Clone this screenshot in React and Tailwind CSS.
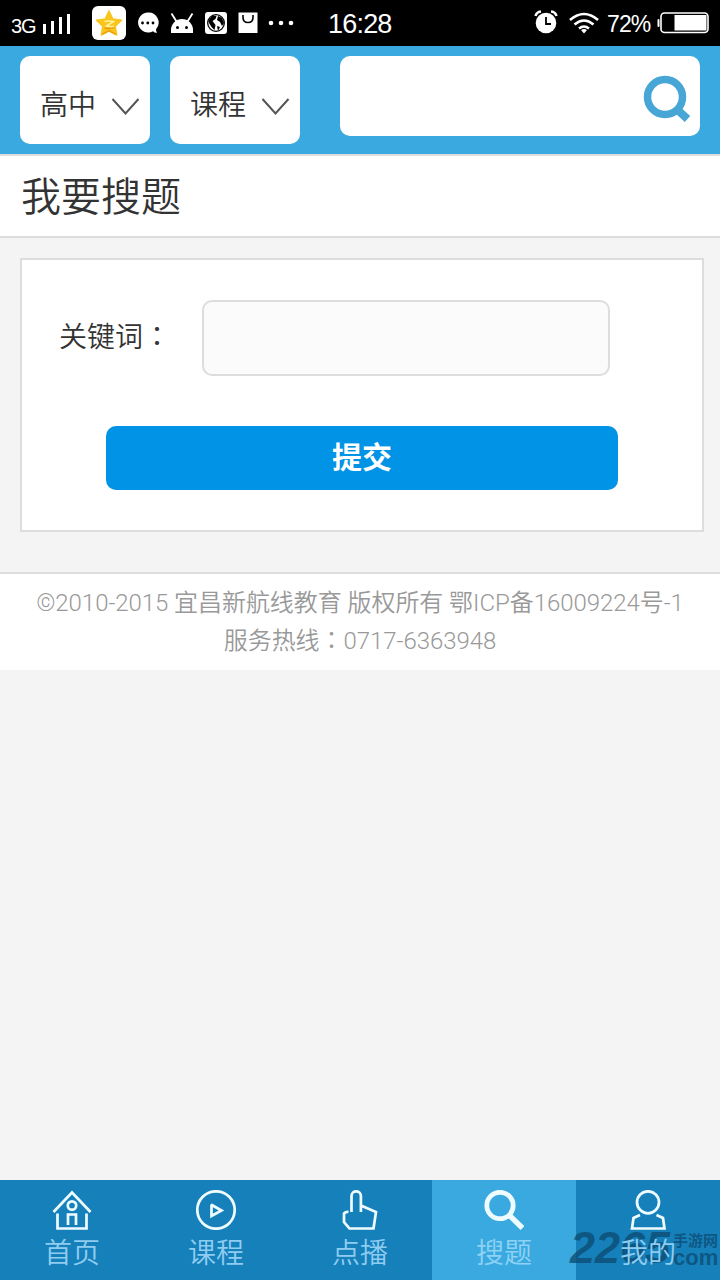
const cjk = "font-['Liberation_Sans','Noto_Sans_CJK_SC',sans-serif]";

function Star() {
  return (
    <svg width="34" height="34" viewBox="0 0 34 34" className="ml-[21px] shrink-0">
      <rect width="34" height="34" rx="6" fill="#fff" />
      <path d="M17 5l3.800 8 8.700 1.200-6.300 6 1.500 8.800L17 25l-7.700 4 1.500-8.800-6.300-6 8.700-1.200z" fill="#fac51c" stroke="#fac51c" strokeWidth="1.500" strokeLinejoin="round" />
      <path d="M12.500 15.500q5-1 9 0L14.500 20q4 1 7.500 .2" fill="none" stroke="#fff3a0" strokeWidth="1.500" />
      <path d="M12.500 22q6 1.200 10-.5M10.500 28l6.500-3.300 6.500 3.300" fill="none" stroke="#e89c12" strokeWidth="1.300" />
    </svg>
  );
}

function StatusBar() {
  return (
    <div className="flex h-[46px] items-center bg-black text-white">
      <span className="ml-[11px] mt-[5px] w-[25px] text-[20px] leading-none tracking-[-1.2px]">3G</span>
      <svg width="29" height="21" viewBox="0 0 29 21" className="ml-[6px]" fill="#fff">
        <rect x="1" y="11" width="3" height="10" /><rect x="9" y="8" width="3" height="13" />
        <rect x="17" y="4" width="3" height="17" /><rect x="25" y="1" width="3" height="20" />
      </svg>
      <Star />
      <svg width="22" height="22" viewBox="0 0 22 22" className="ml-[11px]">
        <path d="M11 .5a10 10 0 1 0 5 18.700q2 2 4 1.500-1-1-1-3.500A10 10 0 0 0 11 .5z" fill="#fff" />
        <circle cx="5.500" cy="11" r="1.400" /><circle cx="10.800" cy="11" r="1.400" /><circle cx="16" cy="11" r="1.400" />
      </svg>
      <svg width="24" height="22" viewBox="0 0 24 22" className="ml-[11px]">
        <path d="M1 21V18a11 11 0 0 1 22 0v3z" fill="#fff" />
        <path d="M1.500 1.500l5 8M22.500 1.500l-5 8" stroke="#fff" strokeWidth="1.800" />
        <circle cx="7.500" cy="15.500" r="1.500" /><circle cx="16.500" cy="15.500" r="1.500" />
      </svg>
      <svg width="22" height="22" viewBox="0 0 22 22" className="ml-[11px]">
        <rect width="22" height="22" rx="3" fill="#fff" />
        <circle cx="11" cy="11" r="8.300" fill="#fff" stroke="#000" strokeWidth="1.300" />
        <path d="M3.500 8l4-4.500 4 .5-1 3-3 2 3 4-1 5-3-3-2.500-4zM13 4l4 2 2 5-2 3-2-4-3-2zM12 14l3 1-2 4z" />
      </svg>
      <svg width="20" height="22" viewBox="0 0 20 22" className="ml-[11px]">
        <rect x="0.500" y="0.500" width="19" height="20.500" fill="#fff" />
        <path d="M5 3v2.500q0 5 5 5t5-5V3" fill="none" stroke="#000" strokeWidth="1.600" />
      </svg>
      <svg width="26" height="6" viewBox="0 0 26 6" className="ml-[10px]" fill="#fff">
        <circle cx="3" cy="3" r="2.300" /><circle cx="13" cy="3" r="2.300" /><circle cx="23" cy="3" r="2.300" />
      </svg>
      <span className="ml-[34px] mt-[3px] w-[72px] text-[27px] leading-none tracking-[-0.8px]">16:28</span>
      <svg width="24" height="24" viewBox="0 0 24 24" className="mb-[2px] ml-auto">
        <circle cx="12" cy="13" r="10.300" fill="#fff" />
        <path d="M1.500 6q1-4 5.500-4.500M22.500 6q-1-4-5.500-4.500" fill="none" stroke="#fff" strokeWidth="2.500" />
        <path d="M12 7v7h5" fill="none" stroke="#000" strokeWidth="1.800" />
      </svg>
      <svg width="30" height="22" viewBox="0 0 30 22" className="ml-[11px]" fill="none" stroke="#fff" strokeWidth="2.600">
        <path d="M1 8Q15-4 29 8M5.500 12.500q9.500-8 19 0M10 16.500q5-4 10 0" />
        <path d="M12 18q3-2 6 0l-3 3.500z" fill="#fff" stroke="none" />
      </svg>
      <span className="ml-[8px] mt-[3px] w-[45px] text-[23px] leading-none tracking-[-0.9px]">72%</span>
      <svg width="52" height="22" viewBox="0 0 52 22" className="ml-[5px] mr-[11px]">
        <rect x="4" y="1" width="47" height="19.500" rx="3.500" fill="none" stroke="#fff" strokeWidth="1.600" />
        <rect x="17.500" y="3" width="32" height="15.500" fill="#fff" /><rect x="0.500" y="7" width="2" height="8" rx="1" fill="#fff" />
      </svg>
    </div>
  );
}

function Picker({ label }) {
  return (
    <button className="flex h-[88px] w-[130px] items-center rounded-[10px] bg-white pl-5 text-[28px] font-[350] text-[#333]">
      <span className="mt-[12px] w-[56px] leading-[40px]">{label}</span>
      <svg width="30" height="20" viewBox="0 0 30 20" className="ml-[15px] mt-[13px]">
        <path d="M1.500 2l13 14.500L27.500 2" fill="none" stroke="#555" strokeWidth="2" />
      </svg>
    </button>
  );
}

const tabs = [
  ["首页", <><path d="M1.500 22L20 2.500 38.500 22" /><path d="M5.500 23.500v15h29V23.500" /><circle cx="20" cy="15.500" r="4.200" /><path d="M16 35V24.500h8V35" /></>],
  ["课程", <><circle cx="20" cy="20" r="18.700" /><path d="M15.500 14.500v11.500l10-5.500L15 14.500" /></>],
  ["点播", <path d="M11.500 22V6a4.700 4.700 0 0 1 9.400 0v16M20.900 15.500L36 22l-2.500 16.500H9.500L4 32V23.500q2-2 4.500-1.500" />],
  ["搜题", <><circle cx="16" cy="15.500" r="13.200" strokeWidth="4.800" /><path d="M25.500 25.500l13 12.500" strokeWidth="5.500" /></>],
  ["我的", <><circle cx="20" cy="12.300" r="11" /><path d="M12 25l-6.500 3L4 38.500h32.500L35 28l-6.500-3" /></>],
];

export default function App() {
  return (
    <div className={`relative flex h-[1280px] w-[720px] flex-col overflow-hidden bg-[#f4f4f4] ${cjk}`}>
      <StatusBar />
      <header className="flex h-[108px] items-start bg-[#3aa9e0] px-5 pt-[10px]">
        <Picker label="高中" />
        <div className="w-5" />
        <Picker label="课程" />
        <div className="ml-10 flex h-[80px] w-[360px] justify-end rounded-[10px] bg-white">
          <svg width="50" height="52" viewBox="0 0 50 52" className="mr-[8px] mt-[18px]" fill="none" stroke="#47a6d5">
            <circle cx="23" cy="23" r="17.500" strokeWidth="7.500" />
            <path d="M34 34.500l11.500 10.500" strokeWidth="8" />
          </svg>
        </div>
      </header>
      <h1 className="flex h-[84px] items-center border-y-2 border-[#ddd] bg-white pl-[21px] pt-[2px] text-[40px] font-[350] leading-none text-[#333]">我要搜题</h1>
      <main className="ml-5 mt-5 h-[274px] w-[684px] border-2 border-[#ddd] bg-white">
        <div className="mt-10 flex">
          <label className="ml-[37px] mt-[15px] w-[143px] text-[28px] font-[350] leading-[40px] text-[#333]">关键词<span className="font-['Noto_Sans_CJK_TC',sans-serif]">：</span></label>
          <input className="h-[76px] w-[408px] rounded-[10px] border-2 border-[#ddd] bg-[#fbfbfb]" />
        </div>
        <button className="ml-[84px] mt-[50px] block h-[64px] w-[512px] rounded-[10px] bg-[#0193e5] pb-px text-[30px] font-bold leading-none text-white">提交</button>
      </main>
      <footer className="mt-10 h-[98px] border-t-2 border-[#ddd] bg-white pt-[11px] text-center font-['Roboto','Noto_Sans_CJK_SC',sans-serif] text-[24px] font-[350] leading-[36px] tracking-[-0.05px] text-[#999]">
        <p className="whitespace-nowrap">©2010-2015 宜昌新航线教育 版权所有 鄂ICP备16009224号-1</p>
        <p>服务热线<span className="font-['Noto_Sans_CJK_TC',sans-serif]">：</span>0717-6363948</p>
      </footer>
      <div className="absolute bottom-[13px] left-[570px] z-10 flex h-[38px] w-[150px] items-end text-[#0b4a70]/75">
        <span className="w-[103px] text-[45px] font-bold italic leading-[38px]">2265</span>
        <span className="flex flex-col">
          <span className="whitespace-nowrap text-[15px] font-bold leading-[16px]">手游网</span>
          <span className="text-[22px] font-bold leading-[18px]">com</span>
        </span>
      </div>
      <nav className="mt-auto grid h-[100px] grid-cols-5 bg-[#1680bb]">
        {tabs.map(([name, icon]) => (
          <a key={name} className={name === "搜题" ? "flex flex-col items-center bg-[#3aa9e0] pt-[10px] text-[#8fd2f5]" : "flex flex-col items-center pt-[10px] text-[#8fcdf0]"}>
            <svg width="40" height="40" viewBox="0 0 40 40" fill="none" stroke="#effcff" strokeWidth="2.700">{icon}</svg>
            <span className="relative z-20 mt-[4px] text-[28px] font-[350] leading-[40px]">{name}</span>
          </a>
        ))}
      </nav>
    </div>
  );
}
